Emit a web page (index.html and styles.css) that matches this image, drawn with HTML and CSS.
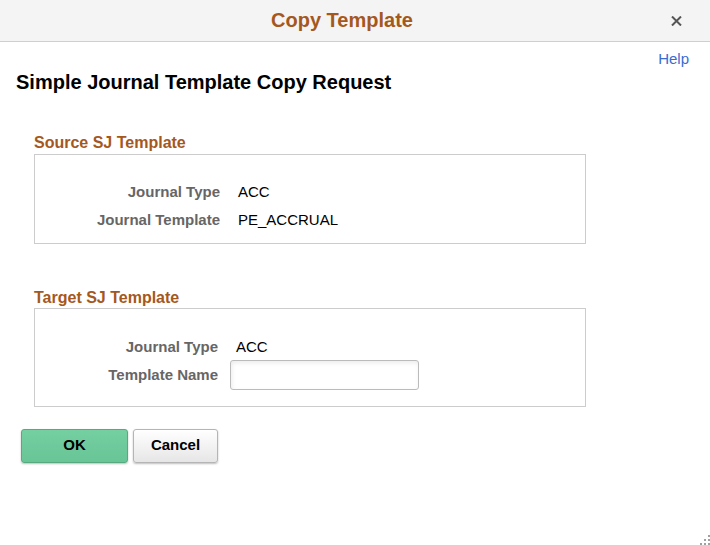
FILE: index.html
```html
<!DOCTYPE html>
<html>
<head>
<meta charset="utf-8">
<link rel="stylesheet" href="styles.css">
</head>
<body>
<div class="dialog">
  <div class="header">
    <span></span>
    <span class="title">Copy Template</span>
    <svg class="close" width="11" height="10" viewBox="0 0 11 10"><path d="M1 0.5 L10 9.5 M10 0.5 L1 9.5" stroke="#555" stroke-width="2" fill="none"/></svg>
  </div>
  <div class="helprow"><a class="help">Help</a></div>
  <h1 class="heading">Simple Journal Template Copy Request</h1>

  <div class="group source">
    <div class="group-title">Source SJ Template</div>
    <div class="box">
      <div class="row"><span class="lbl">Journal Type</span><span class="val">ACC</span></div>
      <div class="row"><span class="lbl">Journal Template</span><span class="val">PE_ACCRUAL</span></div>
    </div>
  </div>

  <div class="group target">
    <div class="group-title">Target SJ Template</div>
    <div class="box">
      <div class="row"><span class="lbl">Journal Type</span><span class="val">ACC</span></div>
      <div class="row row-input"><span class="lbl">Template Name</span><input class="input" type="text"></div>
    </div>
  </div>

  <div class="buttons">
    <button class="btn ok">OK</button>
    <button class="btn cancel">Cancel</button>
  </div>
  <div class="grip">
    <i class="d1"></i>
    <i class="d2"></i><i class="d3"></i>
    <i class="d4"></i><i class="d5"></i><i class="d6"></i>
  </div>
</div>
</body>
</html>
```

FILE: styles.css
```css
html, body {
  margin: 0;
  padding: 0;
  background: #ffffff;
}
body {
  font-family: "Liberation Sans", Arial, sans-serif;
  color: #000;
}
.dialog {
  position: relative;
  width: 710px;
  height: 545px;
  overflow: hidden;
}
.header {
  height: 41px;
  background: #f4f4f4;
  border-bottom: 1px solid #cfcfcf;
  display: grid;
  grid-template-columns: 1fr auto 1fr;
  align-items: center;
}
.title {
  font-size: 20px;
  font-weight: bold;
  color: #a5581d;
  margin-right: 26px;
}
.close {
  justify-self: end;
  margin-right: 28px;
}
.helprow {
  margin-top: 9px;
  height: 16px;
  line-height: 16px;
  text-align: right;
  padding-right: 21px;
}
.help {
  font-size: 15px;
  color: #3a6cd0;
}
.heading {
  margin: 4px 0 0 16px;
  font-size: 20px;
  line-height: 22px;
  font-weight: bold;
}
.group {
  margin-left: 34px;
  width: 552px;
}
.source { margin-top: 41px; }
.target { margin-top: 45px; }
.group-title {
  font-size: 16px;
  font-weight: bold;
  color: #a5581d;
  line-height: 18px;
  height: 18px;
}
.source .group-title { margin-bottom: 2px; }
.target .group-title { margin-bottom: 1px; }
.box {
  border: 1px solid #cccccc;
  display: flex;
  flex-direction: column;
}
.source .box { padding: 22px 0 10px; }
.target .box { padding: 23px 0 17px; }
.row {
  display: flex;
  align-items: center;
  height: 28px;
  font-size: 15px;
}
.lbl {
  width: 185px;
  text-align: right;
  font-weight: bold;
  color: #666666;
}
.val {
  margin-left: 18px;
}
.target .lbl { width: 183px; }
.row-input { height: 29px; }
.input {
  margin: 0 0 0 12px;
  box-sizing: border-box;
  width: 189px;
  height: 30px;
  border: 1px solid #bbbbbb;
  border-radius: 3px;
  box-shadow: inset 1px 2px 4px rgba(0,0,0,0.08);
  background: #fff;
  padding: 0;
}
.buttons {
  display: flex;
  gap: 5px;
  margin: 22px 0 0 21px;
}
.btn {
  box-sizing: border-box;
  height: 34px;
  font-family: "Liberation Sans", Arial, sans-serif;
  font-size: 15px;
  font-weight: bold;
  color: #000;
  border-radius: 3px;
  padding: 0 0 3px;
  box-shadow: 0 1px 2px rgba(0,0,0,0.25);
}
.ok {
  width: 107px;
  background: linear-gradient(#74cfa1, #68c596);
  border: 1px solid #58a880;
}
.cancel {
  width: 85px;
  background: linear-gradient(#ffffff, #e6e6e6);
  border: 1px solid #b5b5b5;
}
.grip {
  position: absolute;
  right: 0;
  bottom: 0;
  width: 10px;
  height: 10px;
}
.grip i {
  position: absolute;
  width: 2px;
  height: 2px;
  background: #a0a0a0;
}
.grip .d1 { left: 8px; top: 0; }
.grip .d2 { left: 4px; top: 4px; }
.grip .d3 { left: 8px; top: 4px; }
.grip .d4 { left: 0; top: 8px; }
.grip .d5 { left: 4px; top: 8px; }
.grip .d6 { left: 8px; top: 8px; }
```
